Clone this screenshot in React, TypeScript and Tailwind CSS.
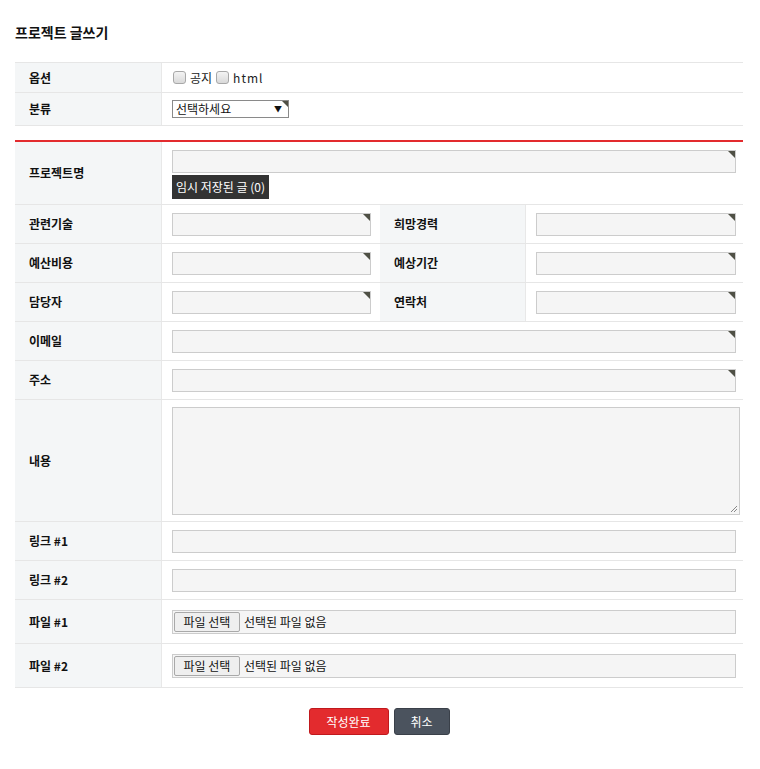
import React from 'react';

const font = { fontFamily: '"Noto Sans CJK KR", "Noto Sans", sans-serif' };

function Corner() {
  return (
    <span className="absolute top-0 right-0 w-0 h-0 border-t-[7px] border-l-[7px] border-l-transparent border-t-[#4f5045]" />
  );
}

function TextInput({ width, mark = true }: { width: string; mark?: boolean }) {
  return (
    <div className={`relative h-[23px] ${width} bg-[#f5f5f5] border border-[#cccccc]`}>
      {mark && <Corner />}
    </div>
  );
}

function Label({ children, w = 'w-[147px]' }: { children: React.ReactNode; w?: string }) {
  return (
    <div className={`${w} shrink-0 self-stretch flex items-center pl-[14px] bg-[#f4f6f7] border-r border-[#e8e8e8] text-[12px] font-bold text-[#111]`}>
      {children}
    </div>
  );
}

function Row({ h, children }: { h: string; children: React.ReactNode }) {
  return <div className={`flex items-center ${h} border-b border-[#e6e6e6]`}>{children}</div>;
}

function FileInput() {
  return (
    <div className="flex items-center h-[24px] w-[564px] bg-[#f5f5f5] border border-[#cccccc] text-[12px] text-[#111]">
      <span className="ml-px h-[20px] w-[66px] flex items-center justify-center bg-[#efefef] border border-[#a9a9a9] rounded-[2px]">파일 선택</span>
      <span className="ml-[4px]">선택된 파일 없음</span>
    </div>
  );
}

export default function App() {
  return (
    <div className="min-h-screen bg-white pl-[15px] pt-[22px]" style={font}>
      <div className="w-[728px]">
        <h1 className="text-[14px] font-bold text-[#111] leading-[20px]">프로젝트 글쓰기</h1>

        <div className="mt-[20px] border-t border-[#e6e6e6]">
          <Row h="h-[30px]">
            <Label>옵션</Label>
            <div className="flex items-center pl-[11px] text-[12px] text-[#222]">
              <span className="w-[13px] h-[13px] rounded-[3px] border border-[#a8a8a8] bg-gradient-to-b from-[#f4f4f4] to-[#d9d9d9]" />
              <span className="ml-[4px]">공지</span>
              <span className="ml-[4px] w-[13px] h-[13px] rounded-[3px] border border-[#a8a8a8] bg-gradient-to-b from-[#f4f4f4] to-[#d9d9d9]" />
              <span className="ml-[4px] tracking-[1px]">html</span>
            </div>
          </Row>
          <Row h="h-[33px]">
            <Label>분류</Label>
            <div className="pl-[10px]">
              <div className="relative h-[18px] w-[117px] bg-white border border-[#8a8a8a] flex items-center pl-[3px] text-[12px] text-[#111]">
                선택하세요
                <span className="absolute right-[6px] top-[3px] text-[8px] leading-[10px]">▼</span>
                <span className="absolute top-0 right-0 w-0 h-0 border-t-[6px] border-l-[6px] border-l-transparent border-t-[#4f5045]" />
              </div>
            </div>
          </Row>
        </div>

        <div className="mt-[14px] border-t-2 border-[#e32b2e]">
          <Row h="h-[63px]">
            <Label>프로젝트명</Label>
            <div className="pl-[10px] self-start pt-[8px]">
              <TextInput width="w-[564px]" />
              <div className="inline-flex items-center h-[24px] px-[4px] bg-[#333333] text-white text-[12px]">임시 저장된 글 (0)</div>
            </div>
          </Row>
          {[
            ['관련기술', '희망경력'],
            ['예산비용', '예상기간'],
            ['담당자', '연락처'],
          ].map(([a, b]) => (
            <Row key={a} h="h-[39px]">
              <Label>{a}</Label>
              <div className="w-[218px] pl-[10px]">
                <TextInput width="w-[199px]" />
              </div>
              <Label w="w-[146px]">{b}</Label>
              <div className="pl-[10px]">
                <TextInput width="w-[200px]" />
              </div>
            </Row>
          ))}
          <Row h="h-[39px]">
            <Label>이메일</Label>
            <div className="pl-[10px]">
              <TextInput width="w-[564px]" />
            </div>
          </Row>
          <Row h="h-[39px]">
            <Label>주소</Label>
            <div className="pl-[10px]">
              <TextInput width="w-[564px]" />
            </div>
          </Row>
          <Row h="h-[122px]">
            <Label>내용</Label>
            <div className="pl-[10px]">
              <div className="relative h-[108px] w-[568px] bg-[#f5f5f5] border border-[#cccccc]">
                <svg className="absolute right-[2px] bottom-[2px]" width="7" height="7" viewBox="0 0 7 7">
                  <path d="M1 7 L7 1 M4 7 L7 4" stroke="#888" strokeWidth="1" />
                </svg>
              </div>
            </div>
          </Row>
          <Row h="h-[39px]">
            <Label>링크 #1</Label>
            <div className="pl-[10px]">
              <TextInput width="w-[564px]" mark={false} />
            </div>
          </Row>
          <Row h="h-[39px]">
            <Label>링크 #2</Label>
            <div className="pl-[10px]">
              <TextInput width="w-[564px]" mark={false} />
            </div>
          </Row>
          <Row h="h-[44px]">
            <Label>파일 #1</Label>
            <div className="pl-[10px]">
              <FileInput />
            </div>
          </Row>
          <Row h="h-[44px]">
            <Label>파일 #2</Label>
            <div className="pl-[10px]">
              <FileInput />
            </div>
          </Row>
        </div>

        <div className="mt-[20px] flex justify-center gap-[5px]">
          <button className="h-[27px] w-[80px] rounded-[3px] bg-[#e32b2e] border border-[#c0191d] text-white text-[12px]">작성완료</button>
          <button className="h-[27px] w-[56px] rounded-[3px] bg-[#4b535e] border border-[#3a4049] text-white text-[12px]">취소</button>
        </div>
      </div>
    </div>
  );
}
